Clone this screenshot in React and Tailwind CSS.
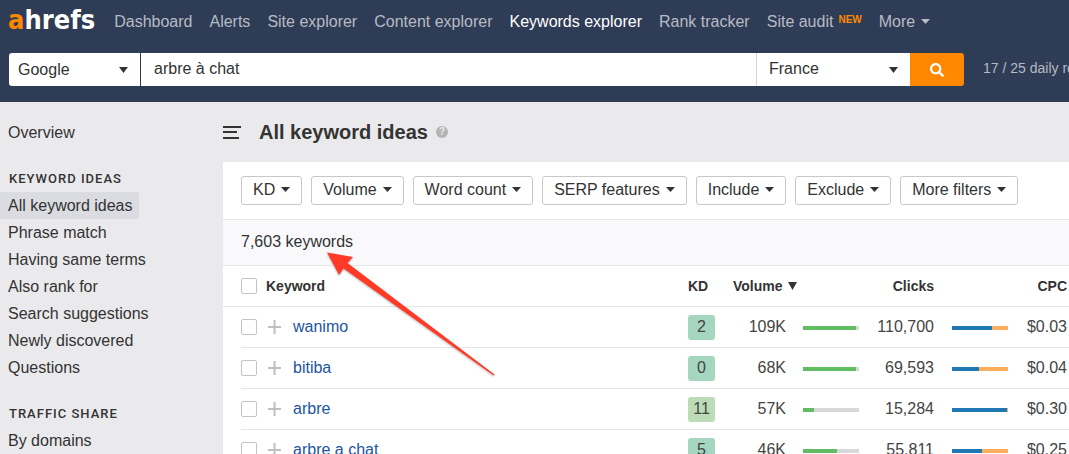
import React from "react";
import { FaSearch } from "react-icons/fa";

const NAV = ["Dashboard", "Alerts", "Site explorer", "Content explorer", "Keywords explorer", "Rank tracker"];
const IDEAS = [
  "All keyword ideas",
  "Phrase match",
  "Having same terms",
  "Also rank for",
  "Search suggestions",
  "Newly discovered",
  "Questions",
];
const FILTERS = ["KD", "Volume", "Word count", "SERP features", "Include", "Exclude", "More filters"];
const ROWS = [
  { keyword: "wanimo", kd: 2, kdClass: "bg-[#a5d6c0]", volume: "109K", rate: 95, clicks: "110,700", organic: 72, cpc: "$0.03" },
  { keyword: "bitiba", kd: 0, kdClass: "bg-[#a5d6c0]", volume: "68K", rate: 95, clicks: "69,593", organic: 48, cpc: "$0.04" },
  { keyword: "arbre", kd: 11, kdClass: "bg-[#bbdcb7]", volume: "57K", rate: 20, clicks: "15,284", organic: 99, cpc: "$0.30" },
  { keyword: "arbre a chat", kd: 5, kdClass: "bg-[#a5d6c0]", volume: "46K", rate: 61, clicks: "55,811", organic: 54, cpc: "$0.25" },
];

function Caret({ className = "" }) {
  return (
    <svg aria-hidden="true" viewBox="0 0 9 5" className={`h-[5px] w-[9px] shrink-0 fill-current ${className}`}>
      <path d="M0 0h9L4.500 5z" />
    </svg>
  );
}

function Select({ label, value, className }) {
  return (
    <div className={`relative shrink-0 ${className}`}>
      <select
        aria-label={label}
        defaultValue={value}
        className="block h-full w-full appearance-none rounded-[inherit] bg-white text-[#333]"
      >
        <option>{value}</option>
      </select>
      <svg
        aria-hidden="true"
        viewBox="0 0 9 6"
        className="pointer-events-none absolute right-[12px] top-[14px] h-[6px] w-[9px] fill-[#333]"
      >
        <path d="M0 0h9L4.500 6z" />
      </svg>
    </div>
  );
}

function Check({ label }) {
  return (
    <input
      type="checkbox"
      aria-label={label}
      className="block size-4 appearance-none rounded-[2px] border border-[#c4c4c4] bg-white checked:bg-[#1f77b4]"
    />
  );
}

function Bar({ value, fill, track }) {
  return (
    <div className={`mt-[2px] h-1 w-14 ${track}`}>
      <div className={`h-1 ${fill}`} style={{ width: `${value}%` }} />
    </div>
  );
}

function Header() {
  return (
    <header className="bg-[#2f3c56] pb-4 text-[#b7bbc4]">
      <nav className="flex h-[43px] items-center gap-[17px] whitespace-nowrap pl-2">
        <a
          href="#home"
          className="mr-[2px] pb-[3px] font-['DejaVu_Sans_Condensed','DejaVu_Sans',sans-serif] text-[27px] font-bold leading-[38px] text-white"
        >
          <span className="text-[#ff8800]">a</span>hrefs
        </a>
        {NAV.map((item) => (
          <a key={item} href="#nav" className={item === "Keywords explorer" ? "text-white" : ""}>
            {item}
          </a>
        ))}
        <a href="#audit" className="flex gap-[5px]">
          Site audit
          <span className="text-[10px] font-bold leading-[16px] text-[#ff8800]">NEW</span>
        </a>
        <button type="button" className="flex items-center gap-[6px]">
          More <Caret />
        </button>
      </nav>
      <form className="mt-[10px] flex h-[33px] items-stretch pl-[9px]" onSubmit={(e) => e.preventDefault()}>
        <Select label="Search engine" value="Google" className="mr-px w-[131px] rounded-l-[3px] [&>select]:pl-[9px]" />
        <input
          type="text"
          aria-label="Keywords"
          defaultValue="arbre à chat"
          className="min-w-0 flex-1 bg-white pb-[2px] pl-[13px] text-[#333]"
        />
        <Select label="Country" value="France" className="w-[154px] border-l border-[#d5d5d5] bg-white [&>select]:pb-[2px] [&>select]:pl-[12px]" />
        <button
          type="submit"
          aria-label="Search"
          className="flex w-[54px] shrink-0 items-center justify-center rounded-r-[3px] bg-[#ff8800] text-white"
        >
          <FaSearch size={14} />
        </button>
        <p className="ml-[19px] w-[86px] shrink-0 overflow-hidden whitespace-nowrap text-[14px] leading-[31px]">
          17 / 25 daily reports
        </p>
      </form>
    </header>
  );
}

function SideHeading({ children }) {
  return (
    <h2 className="mb-[3px] mt-[23px] pl-[9px] font-[Roboto,sans-serif] text-[13px] font-medium leading-[20px] tracking-[1px]">
      {children}
    </h2>
  );
}

function SideLink({ children, active }) {
  return (
    <li className="flex">
      <a href="#section" className={`rounded-r-[3px] pl-2 pr-[6px] leading-[27px] ${active ? "bg-[#dbdce2]" : ""}`}>
        {children}
      </a>
    </li>
  );
}

function Sidebar() {
  return (
    <aside className="w-[223px] shrink-0 whitespace-nowrap pt-[17px]">
      <ul>
        <SideLink>Overview</SideLink>
      </ul>
      <SideHeading>KEYWORD IDEAS</SideHeading>
      <ul>
        {IDEAS.map((item, i) => (
          <SideLink key={item} active={i === 0}>
            {item}
          </SideLink>
        ))}
      </ul>
      <SideHeading>TRAFFIC SHARE</SideHeading>
      <ul>
        <SideLink>By domains</SideLink>
      </ul>
    </aside>
  );
}

function Results() {
  return (
    <table className="w-full table-fixed border-collapse whitespace-nowrap">
      <colgroup>
        <col className="w-[18px]" />
        <col className="w-[25px]" />
        <col className="w-[27px]" />
        <col />
        <col className="w-[27px]" />
        <col className="w-[71px]" />
        <col className="w-[73px]" />
        <col className="w-[75px]" />
        <col className="w-[74px]" />
        <col className="w-[61px]" />
      </colgroup>
      <thead>
        <tr className="h-[40px] border-b border-[#e6e6e6] text-left text-[14px] leading-[20px]">
          <td />
          <td className="p-0"><Check label="Select all keywords" /></td>
          <th colSpan={2} className="p-0">Keyword</th>
          <th className="p-0">KD</th>
          <th colSpan={2} className="p-0 pl-[18px]">
            <span className="flex items-center gap-[5px]">
              Volume
              <svg aria-hidden="true" viewBox="0 0 9 8" className="h-2 w-[9px] fill-current">
                <path d="M0 0h9L4.500 8z" />
              </svg>
            </span>
          </th>
          <th className="p-0 text-right">Clicks</th>
          <td />
          <th className="p-0 pr-[2px] text-right">CPC</th>
        </tr>
      </thead>
      <tbody>
        {ROWS.map((row) => (
          <tr key={row.keyword} className="h-[41px] text-[#444] [&>td]:p-0 [&>td:not(:first-child)]:border-b [&>td]:border-[#e6e6e6]">
            <td />
            <td><Check label={`Select ${row.keyword}`} /></td>
            <td>
              <button type="button" aria-label={`Add ${row.keyword}`} className="block text-[#bfbfbf]">
                <svg viewBox="0 0 17 14" className="h-[14px] w-[17px]" fill="none" stroke="currentColor" strokeWidth="2">
                  <path d="M2 7h13M8.500 0v14" />
                </svg>
              </button>
            </td>
            <td><a href="#keyword" className="text-[#1b56a0]">{row.keyword}</a></td>
            <td>
              <div className={`mt-[2px] h-[25px] rounded-[3px] text-center leading-[23px] ${row.kdClass}`}>{row.kd}</div>
            </td>
            <td className="text-right">{row.volume}</td>
            <td className="pl-[17px]!"><Bar value={row.rate} fill="bg-[#62bd62]" track="bg-[#d8d8d8]" /></td>
            <td className="text-right">{row.clicks}</td>
            <td className="pl-[18px]!"><Bar value={row.organic} fill="bg-[#1f77b4]" track="bg-[#ffae5e]" /></td>
            <td className="pr-[2px]! text-right">{row.cpc}</td>
          </tr>
        ))}
      </tbody>
    </table>
  );
}

export default function App() {
  return (
    <div className="relative h-screen overflow-hidden bg-[#eaeaec] font-['Liberation_Sans',Arial,sans-serif] text-[16px] leading-[20px] text-[#333]">
      <Header />
      <div className="flex">
        <Sidebar />
        <main className="min-w-0 flex-1">
          <div className="flex h-[60px] items-center">
            <svg aria-hidden="true" viewBox="0 0 18 14" className="mr-[18px] h-[14px] w-[18px]" fill="#333">
              <path d="M0 1h18v2H0zM0 6h14v2H0zM0 12h16v2H0z" />
            </svg>
            <h1 className="text-[20px] font-bold leading-[24px]">All keyword ideas</h1>
            <button
              type="button"
              aria-label="Help"
              className="ml-2 flex size-3 items-center justify-center rounded-full bg-[#b4b4b4] text-[10px] font-bold leading-[12px] text-[#eaeaec]"
            >
              ?
            </button>
          </div>
          <section className="bg-white">
            <div className="flex gap-[9px] whitespace-nowrap px-[18px] pb-[14px] pt-[14px]">
              {FILTERS.map((name) => (
                <button
                  key={name}
                  type="button"
                  className="flex h-[29px] items-center gap-[6px] rounded-[3px] border border-[#c8c8c8] pb-[2px] pl-[11px] pr-[11px]"
                >
                  {name} <Caret />
                </button>
              ))}
            </div>
            <p className="border-y border-[#e6e6e6] bg-[#f9f9fb] px-[18px] pb-px leading-[44px]">7,603 keywords</p>
            <Results />
          </section>
        </main>
      </div>
      <svg
        aria-hidden="true"
        viewBox="0 0 172 128"
        className="pointer-events-none absolute left-[325px] top-[250px] h-[128px] w-[172px] drop-shadow-[0_1px_1px_rgba(0,0,0,0.3)]"
      >
        <path d="M2 2.500 28 7 22.500 13 169.500 124.500 168.500 125.500 18.500 18.500 14 25z" fill="#ff3b28" />
      </svg>
    </div>
  );
}
